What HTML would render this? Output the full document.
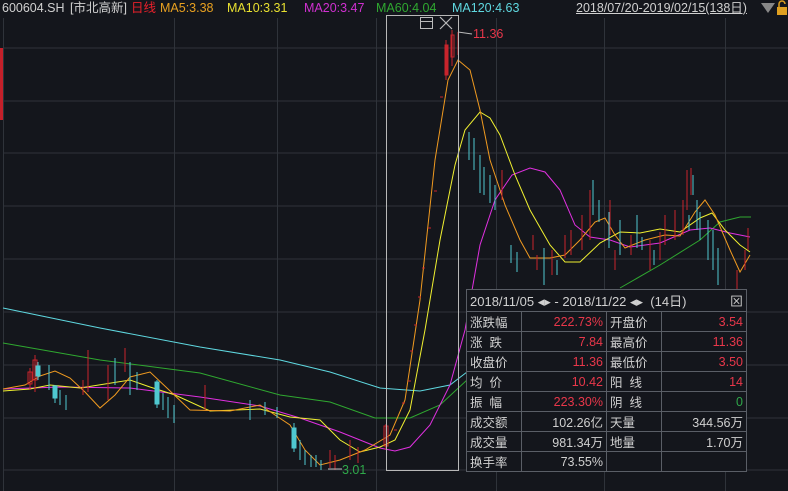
<!DOCTYPE html>
<html><head><meta charset="utf-8"><style>
body{margin:0;background:#14161c;width:788px;height:491px;overflow:hidden;font-family:"Liberation Sans","Noto Sans CJK SC",sans-serif;}
.hd{position:absolute;top:0;left:0;font-size:12.5px;white-space:nowrap;line-height:17px}
.hd span{position:absolute;top:0px}
table{position:absolute;left:466px;top:289px;border-collapse:collapse;background:#14161c;font-size:12.5px;color:#d0d0d0}
td{border:1px solid #5a5e66;height:19px;padding:0 3px;white-space:nowrap}
.r{color:#e8374a;text-align:right}.w{text-align:right}.g{color:#2fa84a;text-align:right}
</style></head><body>
<svg width="788" height="491" style="position:absolute;left:0;top:0">
<g stroke="#2f333a" stroke-width="1">
<line x1="3" y1="48" x2="788" y2="48"/><line x1="3" y1="101" x2="788" y2="101"/><line x1="3" y1="153" x2="788" y2="153"/><line x1="3" y1="206" x2="788" y2="206"/><line x1="3" y1="259" x2="788" y2="259"/><line x1="3" y1="312" x2="788" y2="312"/><line x1="3" y1="365" x2="788" y2="365"/><line x1="3" y1="418" x2="788" y2="418"/><line x1="3" y1="470" x2="788" y2="470"/>
<line x1="174.5" y1="18" x2="174.5" y2="491"/><line x1="277.5" y1="18" x2="277.5" y2="491"/><line x1="376.5" y1="18" x2="376.5" y2="491"/><line x1="496.5" y1="18" x2="496.5" y2="491"/><line x1="604.5" y1="18" x2="604.5" y2="491"/><line x1="725.5" y1="18" x2="725.5" y2="491"/>
<line x1="3.5" y1="18" x2="3.5" y2="491"/>
</g>
<rect x="0" y="48" width="3" height="72" fill="#c4202a"/>
<g fill="none" stroke-width="1">
<polyline stroke="#5fd8e0" points="3,308 100,328 200,347 280,360 330,372 380,388 420,391 450,385 467,372"/>
<polyline stroke="#2fa830" points="3,343 100,360 200,373 280,395 330,402 375,418 410,418 440,405 467,380"/>
<polyline stroke="#2fa830" points="620,288 660,265 700,240 720,222 740,217 751,217"/>
<polyline stroke="#e030e0" points="3,389 60,387 130,388 200,397 260,406 300,418 340,432 380,448 395,451 410,447 430,425 450,385 465,330 480,245 495,200 512,175 530,168 545,172 560,190 575,225 590,237 610,240 630,247 660,243 690,230 710,228 730,233 750,237"/>
<polyline stroke="#f0f030" points="3,391 30,389 50,385 80,388 130,380 150,387 175,395 210,411 260,409 290,417 320,420 340,440 360,452 380,447 395,440 410,410 425,330 440,240 455,165 465,130 480,112 490,118 500,135 515,175 530,210 550,245 565,262 580,262 600,243 620,232 640,233 660,229 680,232 700,218 712,213 725,230 740,245 750,252"/>
<polyline stroke="#f09a20" points="3,389 25,385 40,376 55,371 70,378 85,392 100,408 115,395 130,377 150,372 168,389 190,410 230,411 260,405 290,425 305,450 320,465 340,460 365,450 390,435 405,400 420,300 435,160 448,80 458,60 470,70 480,110 490,160 505,205 520,240 530,258 550,258 565,255 580,240 595,222 605,218 615,235 625,248 645,240 665,235 680,236 695,212 705,200 715,215 730,250 740,272 750,255"/>
</g>
<g stroke="#c8242c" fill="#c8242c">
<line x1="30" y1="368" x2="30" y2="390"/><rect x="28" y="372" width="4" height="12" fill="none"/>
<line x1="35" y1="355" x2="35" y2="392"/><rect x="33" y="360" width="4" height="20" fill="none"/>
<line x1="88" y1="350" x2="88" y2="392"/><line x1="108" y1="365" x2="108" y2="400"/><line x1="125" y1="348" x2="125" y2="372"/>
<line x1="83" y1="380" x2="83" y2="395"/><line x1="205" y1="385" x2="205" y2="410"/>
<line x1="330" y1="450" x2="330" y2="468"/><line x1="335" y1="455" x2="335" y2="470"/><line x1="350" y1="440" x2="350" y2="460"/><line x1="358" y1="447" x2="358" y2="463"/>
<line x1="386" y1="424" x2="386" y2="450"/><rect x="384" y="426" width="4" height="20" fill="none"/>
<line x1="394" y1="430" x2="397" y2="430"/><line x1="402" y1="403" x2="405" y2="403"/><line x1="408" y1="381" x2="411" y2="381"/><line x1="410" y1="351" x2="413" y2="351"/><line x1="414" y1="325" x2="417" y2="325"/><line x1="418" y1="297" x2="421" y2="297"/><line x1="422" y1="268" x2="425" y2="268"/><line x1="428" y1="228" x2="431" y2="228"/><line x1="434" y1="191" x2="437" y2="191"/><line x1="440" y1="97" x2="443" y2="97"/>
<line x1="446" y1="40" x2="446" y2="80"/><rect x="445" y="45" width="3" height="30"/>
<line x1="452" y1="30" x2="452" y2="66"/><rect x="451" y="35" width="3" height="22" fill="none"/>
<line x1="458" y1="32" x2="458" y2="55"/>
<line x1="502" y1="170" x2="502" y2="200"/><line x1="533" y1="235" x2="533" y2="250"/>
<line x1="537" y1="255" x2="537" y2="270"/><line x1="552" y1="250" x2="552" y2="275"/><line x1="565" y1="235" x2="565" y2="258"/><line x1="571" y1="230" x2="571" y2="255"/><line x1="582" y1="215" x2="582" y2="250"/><line x1="590" y1="190" x2="590" y2="240"/><line x1="610" y1="200" x2="610" y2="235"/>
<line x1="615" y1="250" x2="615" y2="270"/><line x1="631" y1="235" x2="631" y2="255"/><line x1="650" y1="240" x2="650" y2="270"/><line x1="660" y1="232" x2="660" y2="260"/><line x1="665" y1="215" x2="665" y2="245"/><line x1="675" y1="210" x2="675" y2="240"/><line x1="683" y1="200" x2="683" y2="235"/><line x1="687" y1="170" x2="687" y2="210"/><line x1="691" y1="168" x2="691" y2="195"/><line x1="737" y1="270" x2="737" y2="291"/><line x1="745" y1="250" x2="745" y2="270"/><line x1="748" y1="228" x2="748" y2="250"/>
</g>
<g stroke="#4fc8d0" fill="#4fc8d0">
<line x1="38" y1="362" x2="38" y2="380"/><rect x="36" y="366" width="4" height="10"/>
<line x1="49" y1="365" x2="49" y2="390"/><line x1="55" y1="385" x2="55" y2="403"/><rect x="53" y="386" width="4" height="12"/><line x1="60" y1="390" x2="60" y2="405"/><line x1="66" y1="395" x2="66" y2="410"/>
<line x1="115" y1="358" x2="115" y2="385"/><line x1="130" y1="362" x2="130" y2="395"/><line x1="137" y1="372" x2="137" y2="390"/>
<line x1="157" y1="380" x2="157" y2="408"/><rect x="155" y="382" width="4" height="22"/><line x1="163" y1="393" x2="163" y2="410"/><line x1="168" y1="397" x2="168" y2="418"/><line x1="174" y1="405" x2="174" y2="423"/>
<line x1="250" y1="400" x2="250" y2="420"/><line x1="265" y1="402" x2="265" y2="415"/><line x1="277" y1="407" x2="277" y2="418"/>
<line x1="294" y1="423" x2="294" y2="452"/><rect x="292" y="428" width="4" height="20"/><line x1="300" y1="440" x2="300" y2="460"/><line x1="305" y1="450" x2="305" y2="465"/><line x1="311" y1="455" x2="311" y2="467"/><line x1="316" y1="455" x2="316" y2="467"/><line x1="321" y1="460" x2="321" y2="470"/>
<line x1="469" y1="132" x2="469" y2="160"/><line x1="474" y1="138" x2="474" y2="170"/><line x1="480" y1="155" x2="480" y2="193"/><line x1="484" y1="167" x2="484" y2="195"/><line x1="490" y1="175" x2="490" y2="203"/><line x1="495" y1="185" x2="495" y2="210"/>
<line x1="511" y1="245" x2="511" y2="263"/><line x1="517" y1="252" x2="517" y2="272"/><line x1="544" y1="248" x2="544" y2="285"/><line x1="557" y1="260" x2="557" y2="275"/>
<line x1="593" y1="180" x2="593" y2="215"/><line x1="599" y1="200" x2="599" y2="222"/><line x1="609" y1="212" x2="609" y2="248"/><line x1="620" y1="220" x2="620" y2="255"/>
<line x1="637" y1="215" x2="637" y2="248"/><line x1="642" y1="237" x2="642" y2="250"/>
<line x1="654" y1="250" x2="654" y2="265"/><line x1="689" y1="215" x2="689" y2="230"/><line x1="693" y1="175" x2="693" y2="195"/><line x1="697" y1="200" x2="697" y2="230"/><line x1="700" y1="212" x2="700" y2="240"/><line x1="708" y1="220" x2="708" y2="260"/><line x1="713" y1="230" x2="713" y2="270"/><line x1="718" y1="248" x2="718" y2="285"/>
</g>
<rect x="386.5" y="15.5" width="72" height="455" fill="none" stroke="#b8b8b8"/>
<rect x="420.5" y="17.5" width="12" height="11" fill="none" stroke="#bbb"/><line x1="420" y1="21.5" x2="433" y2="21.5" stroke="#bbb"/>
<path d="M440 17 L452 29 M452 17 L440 29" stroke="#bbb" stroke-width="1.2"/>
<path d="M458 32 L472 34" stroke="#bbb"/>
<text x="473" y="38" fill="#e8374a" font-size="12.5" font-family="Liberation Sans">11.36</text>
<path d="M328 469 L342 469" stroke="#bbb"/>
<text x="342" y="474" fill="#2fa84a" font-size="12.5" font-family="Liberation Sans">3.01</text>
<path d="M761 3 L775 3 L768 13 Z" fill="#888"/>
<rect x="777" y="7" width="10" height="8" fill="#e0a020"/><path d="M779 7 V4 a3 3 0 0 1 6 0" fill="none" stroke="#e0a020" stroke-width="1.5"/>
</svg>
<div class="hd">
<span style="left:2px;color:#d0d0d0">600604.SH</span>
<span style="left:70px;color:#d0d0d0">[市北高新]</span>
<span style="left:131px;color:#e8202a">日线</span>
<span style="left:160px;color:#e8a020">MA5:3.38</span>
<span style="left:227px;color:#e8e030">MA10:3.31</span>
<span style="left:304px;color:#d030d0">MA20:3.47</span>
<span style="left:376px;color:#2fa830">MA60:4.04</span>
<span style="left:452px;color:#5fd8e0">MA120:4.63</span>
<span style="left:576px;color:#d0d0d0;text-decoration:underline">2018/07/20-2019/02/15(138日)</span>
</div>
<table>
<tr><td colspan="4" style="font-size:13px;height:21px">2018/11/05 ◂▸ - 2018/11/22 ◂▸ &nbsp;(14日) <span style="float:right">⊠</span></td></tr>
<tr><td style="width:48px">涨跌幅</td><td class="r" style="width:78px">222.73%</td><td style="width:48px">开盘价</td><td class="r" style="width:78px">3.54</td></tr>
<tr><td>涨 &nbsp;跌</td><td class="r">7.84</td><td>最高价</td><td class="r">11.36</td></tr>
<tr><td>收盘价</td><td class="r">11.36</td><td>最低价</td><td class="r">3.50</td></tr>
<tr><td>均 &nbsp;价</td><td class="r">10.42</td><td>阳 &nbsp;线</td><td class="r">14</td></tr>
<tr><td>振 &nbsp;幅</td><td class="r">223.30%</td><td>阴 &nbsp;线</td><td class="g">0</td></tr>
<tr><td>成交额</td><td class="w">102.26亿</td><td>天量</td><td class="w">344.56万</td></tr>
<tr><td>成交量</td><td class="w">981.34万</td><td>地量</td><td class="w">1.70万</td></tr>
<tr><td>换手率</td><td class="w">73.55%</td><td></td><td></td></tr>
</table>
</body></html>
